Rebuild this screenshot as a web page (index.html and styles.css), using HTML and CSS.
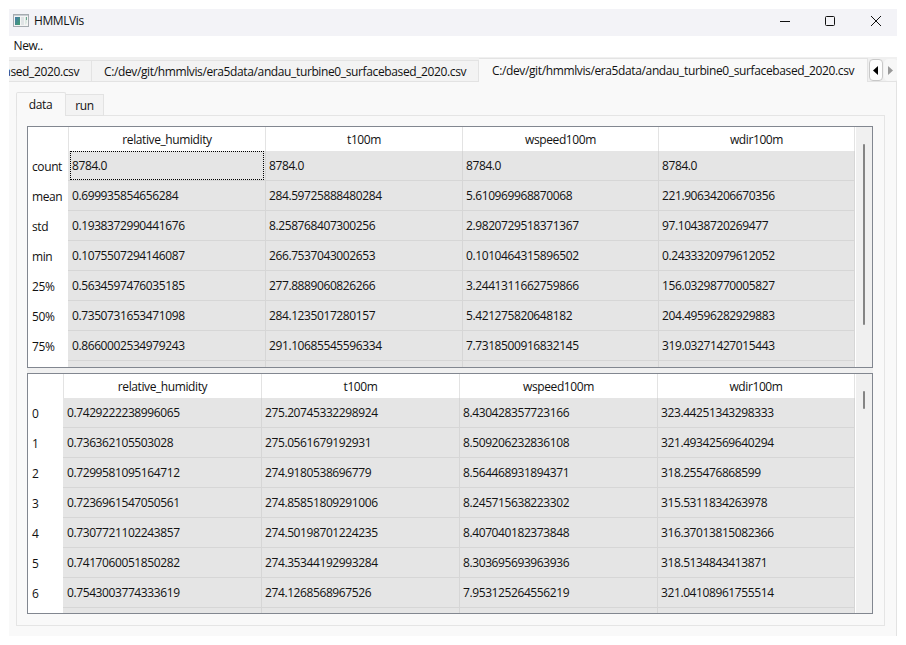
FILE: index.html
```html
<!DOCTYPE html>
<html lang="en">
<head>
<meta charset="utf-8">
<title>HMMLVis</title>
<link rel="stylesheet" href="styles.css">
</head>
<body>
<div class="window">
  <header class="titlebar">
    <svg class="app-icon" width="16" height="14" viewBox="0 0 16 14">
      <defs><linearGradient id="g" x1="0" y1="0" x2="1" y2="1"><stop offset="0" stop-color="#4679ac"/><stop offset="1" stop-color="#43a06c"/></linearGradient></defs>
      <rect x=".5" y=".5" width="15" height="12" fill="#f4f4f4" stroke="#a5abb0"/>
      <path d="M1 1.500h14" stroke="#c9ced3"/>
      <rect x="2" y="3" width="5" height="8" fill="url(#g)"/>
      <rect x="8" y="3" width="3" height="8" fill="#dfe3e5"/>
      <path d="M12 3h2v6l-2 2z" fill="#dce9e3"/><path d="M13.500 3v3" stroke="#68a58d"/>
    </svg>
    <span class="title">HMMLVis</span>
    <svg class="controls" width="104" height="12" viewBox="0 0 104 12" fill="none" stroke="#111">
      <path d="M0 6.500h10"/>
      <rect x="45.500" y="1.500" width="9" height="9" rx="1"/>
      <path d="M91 1l10 10M101 1L91 11"/>
    </svg>
  </header>
  <nav class="menubar"><span>New..</span></nav>
  <div class="filetabs">
    <div class="filetab first"><span>ased_2020.csv</span></div>
    <div class="filetab second"><span>C:/dev/git/hmmlvis/era5data/andau_turbine0_surfacebased_2020.csv</span></div>
    <div class="filetab active"><span>C:/dev/git/hmmlvis/era5data/andau_turbine0_surfacebased_2020.csv</span></div>
    <div class="scroller">
      <div class="arrow"><svg width="5" height="9" viewBox="0 0 5 9"><path d="M5 0v9L0 4.500z" fill="#000"/></svg></div>
      <div class="arrow off"><svg width="5" height="9" viewBox="0 0 5 9"><path d="M0 0v9L5 4.500z" fill="#999"/></svg></div>
    </div>
  </div>
  <main class="page">
    <div class="subtabs"><div class="subtab current">data</div><div class="subtab">run</div></div>
    <section class="pane">
      <div class="table stats">
        <div class="grid">
          <b class="corner"></b><b>relative_humidity</b><b>t100m</b><b>wspeed100m</b><b>wdir100m</b>
          <i>count</i><span class="focus">8784.0</span><span>8784.0</span><span>8784.0</span><span>8784.0</span>
          <i>mean</i><span>0.699935854656284</span><span>284.59725888480284</span><span>5.610969968870068</span><span>221.90634206670356</span>
          <i>std</i><span>0.1938372990441676</span><span>8.258768407300256</span><span>2.9820729518371367</span><span>97.10438720269477</span>
          <i>min</i><span>0.1075507294146087</span><span>266.7537043002653</span><span>0.1010464315896502</span><span>0.2433320979612052</span>
          <i>25%</i><span>0.5634597476035185</span><span>277.8889060826266</span><span>3.2441311662759866</span><span>156.03298770005827</span>
          <i>50%</i><span>0.7350731653471098</span><span>284.1235017280157</span><span>5.421275820648182</span><span>204.49596282929883</span>
          <i>75%</i><span>0.8660002534979243</span><span>291.10685545596334</span><span>7.7318500916832145</span><span>319.03271427015443</span>
          <i></i><span></span><span></span><span></span><span></span>
        </div>
        <div class="scrollbar"><div class="thumb"></div></div>
      </div>
      <div class="table rows">
        <div class="grid">
          <b class="corner"></b><b>relative_humidity</b><b>t100m</b><b>wspeed100m</b><b>wdir100m</b>
          <i>0</i><span>0.7429222238996065</span><span>275.20745332298924</span><span>8.430428357723166</span><span>323.44251343298333</span>
          <i>1</i><span>0.736362105503028</span><span>275.0561679192931</span><span>8.509206232836108</span><span>321.49342569640294</span>
          <i>2</i><span>0.7299581095164712</span><span>274.9180538696779</span><span>8.564468931894371</span><span>318.255476868599</span>
          <i>3</i><span>0.7236961547050561</span><span>274.85851809291006</span><span>8.245715638223302</span><span>315.5311834263978</span>
          <i>4</i><span>0.7307721102243857</span><span>274.50198701224235</span><span>8.407040182373848</span><span>316.37013815082366</span>
          <i>5</i><span>0.7417060051850282</span><span>274.35344192993284</span><span>8.303695693963936</span><span>318.5134843413871</span>
          <i>6</i><span>0.7543003774333619</span><span>274.1268568967526</span><span>7.953125264556219</span><span>321.04108961755514</span>
          <i></i><span></span><span></span><span></span><span></span>
        </div>
        <div class="scrollbar"><div class="thumb"></div></div>
      </div>
    </section>
  </main>
</div>
</body>
</html>
```
FILE: styles.css
```css
* { box-sizing: border-box; }
body {
  margin: 0;
  padding: 9px;
  height: 645px;
  overflow: hidden;
  background: #fff;
  color: #111;
  font: 12px/16px "Open Sans", "Noto Sans", sans-serif;
  letter-spacing: -0.4px;
}
svg { display: block; }
.window { width: 888px; height: 627px; overflow: hidden; display: flex; flex-direction: column; }
.titlebar { height: 27px; flex: none; background: #f3f3f7; display: flex; align-items: center; padding: 0 16px 4px 4px; }
.title { margin-left: 5px; padding-top: 1px; }
.controls { margin-left: auto; margin-right: -3px; }
.menubar { height: 21px; flex: none; padding: 2px 5px; }
.menubar span { margin-left: -0.5px; }

.filetabs { height: 25px; flex: none; display: flex; align-items: flex-end; background: #f0f0f0; white-space: nowrap; box-shadow: inset 0 -1px #e3e3e3; }
.filetab { height: 22px; border: 1px solid #e3e3e3; border-left: 0; background: #f3f3f3; line-height: 22px; overflow: hidden; flex: none; letter-spacing: -0.375px; }
.first { width: 83px; display: flex; justify-content: flex-end; padding-right: 12px; }
.second { width: 387px; padding-left: 12px; }
.filetab.active { height: 24px; width: 389px; padding-left: 13px; background: #f9f9f9; border-bottom: 0; line-height: 23px; }
.scroller { display: flex; gap: 1px; height: 25px; padding: 2px 0 0 1px; }
.arrow { width: 14px; height: 22px; flex: none; border: 1px solid #c8c8c8; border-radius: 4px; background: #fdfdfd; display: grid; place-items: center; padding-right: 1px; }
.arrow.off { border-color: #f7f7f7; background: #f7f7f7; padding-right: 2px; }

.page { flex: 1; min-height: 0; background: #f9f9f9; border-right: 1px solid #e3e3e3; padding: 10px 12px 10px 7px; display: flex; flex-direction: column; }
.subtabs { display: flex; align-items: flex-end; height: 24px; flex: none; position: relative; }
.subtab { width: 38px; height: 22px; border: 1px solid #e3e3e3; border-left: 0; background: #f3f3f3; text-align: center; line-height: 22px; }
.subtab.current { width: 50px; height: 24px; border-left: 1px solid #e3e3e3; border-bottom: 0; background: #f9f9f9; line-height: 23px; border-radius: 2px 2px 0 0; padding-right: 1px; }
.pane { width: 869px; height: 511px; margin-top: -1px; border: 1px solid #e5e5e5; padding: 10px; flex: none; }
.table { display: flex; width: 846px; border: 1px solid #828790; background: #fff; overflow: hidden; }
.stats { height: 242px; box-shadow: 0 5px #f0f0f0; }
.rows { height: 241px; margin-top: 5px; }
.grid { display: grid; flex: none; grid-auto-rows: 30px; align-content: start; }
.stats .grid { grid-template: 24px 30px / 40px 198px 197px 196px 196px; }
.rows .grid { grid-template: 24px 30px / 35px 199px 198px 198px 197px; }
b { font-weight: 400; text-align: center; line-height: 26px; border-right: 1px solid #e3e3e3; overflow: hidden; }
.corner { border-right: 0; }
.corner + b { border-left: 1px solid #e3e3e3; }
i { font-style: normal; padding-left: 4px; line-height: 32px; }
.rows i { line-height: 31px; }
.grid span { background: #e5e5e5; border: solid #d6d6d6; border-width: 0 1px 1px 0; padding-left: 3px; line-height: 29px; }
.grid i + span { padding-left: 4px; }
.grid .focus { position: relative; }
.focus::after { content: ""; position: absolute; inset: 0 1px 0 2px; border: 1px dotted #000; }
.scrollbar { width: 16px; flex: none; margin-left: 1px; background: #f0f0f0; padding: 17px 0 0 7px; }
.thumb { width: 2px; height: 181px; background: #858585; border-radius: 1px; }
.rows .thumb { height: 18px; }
```
